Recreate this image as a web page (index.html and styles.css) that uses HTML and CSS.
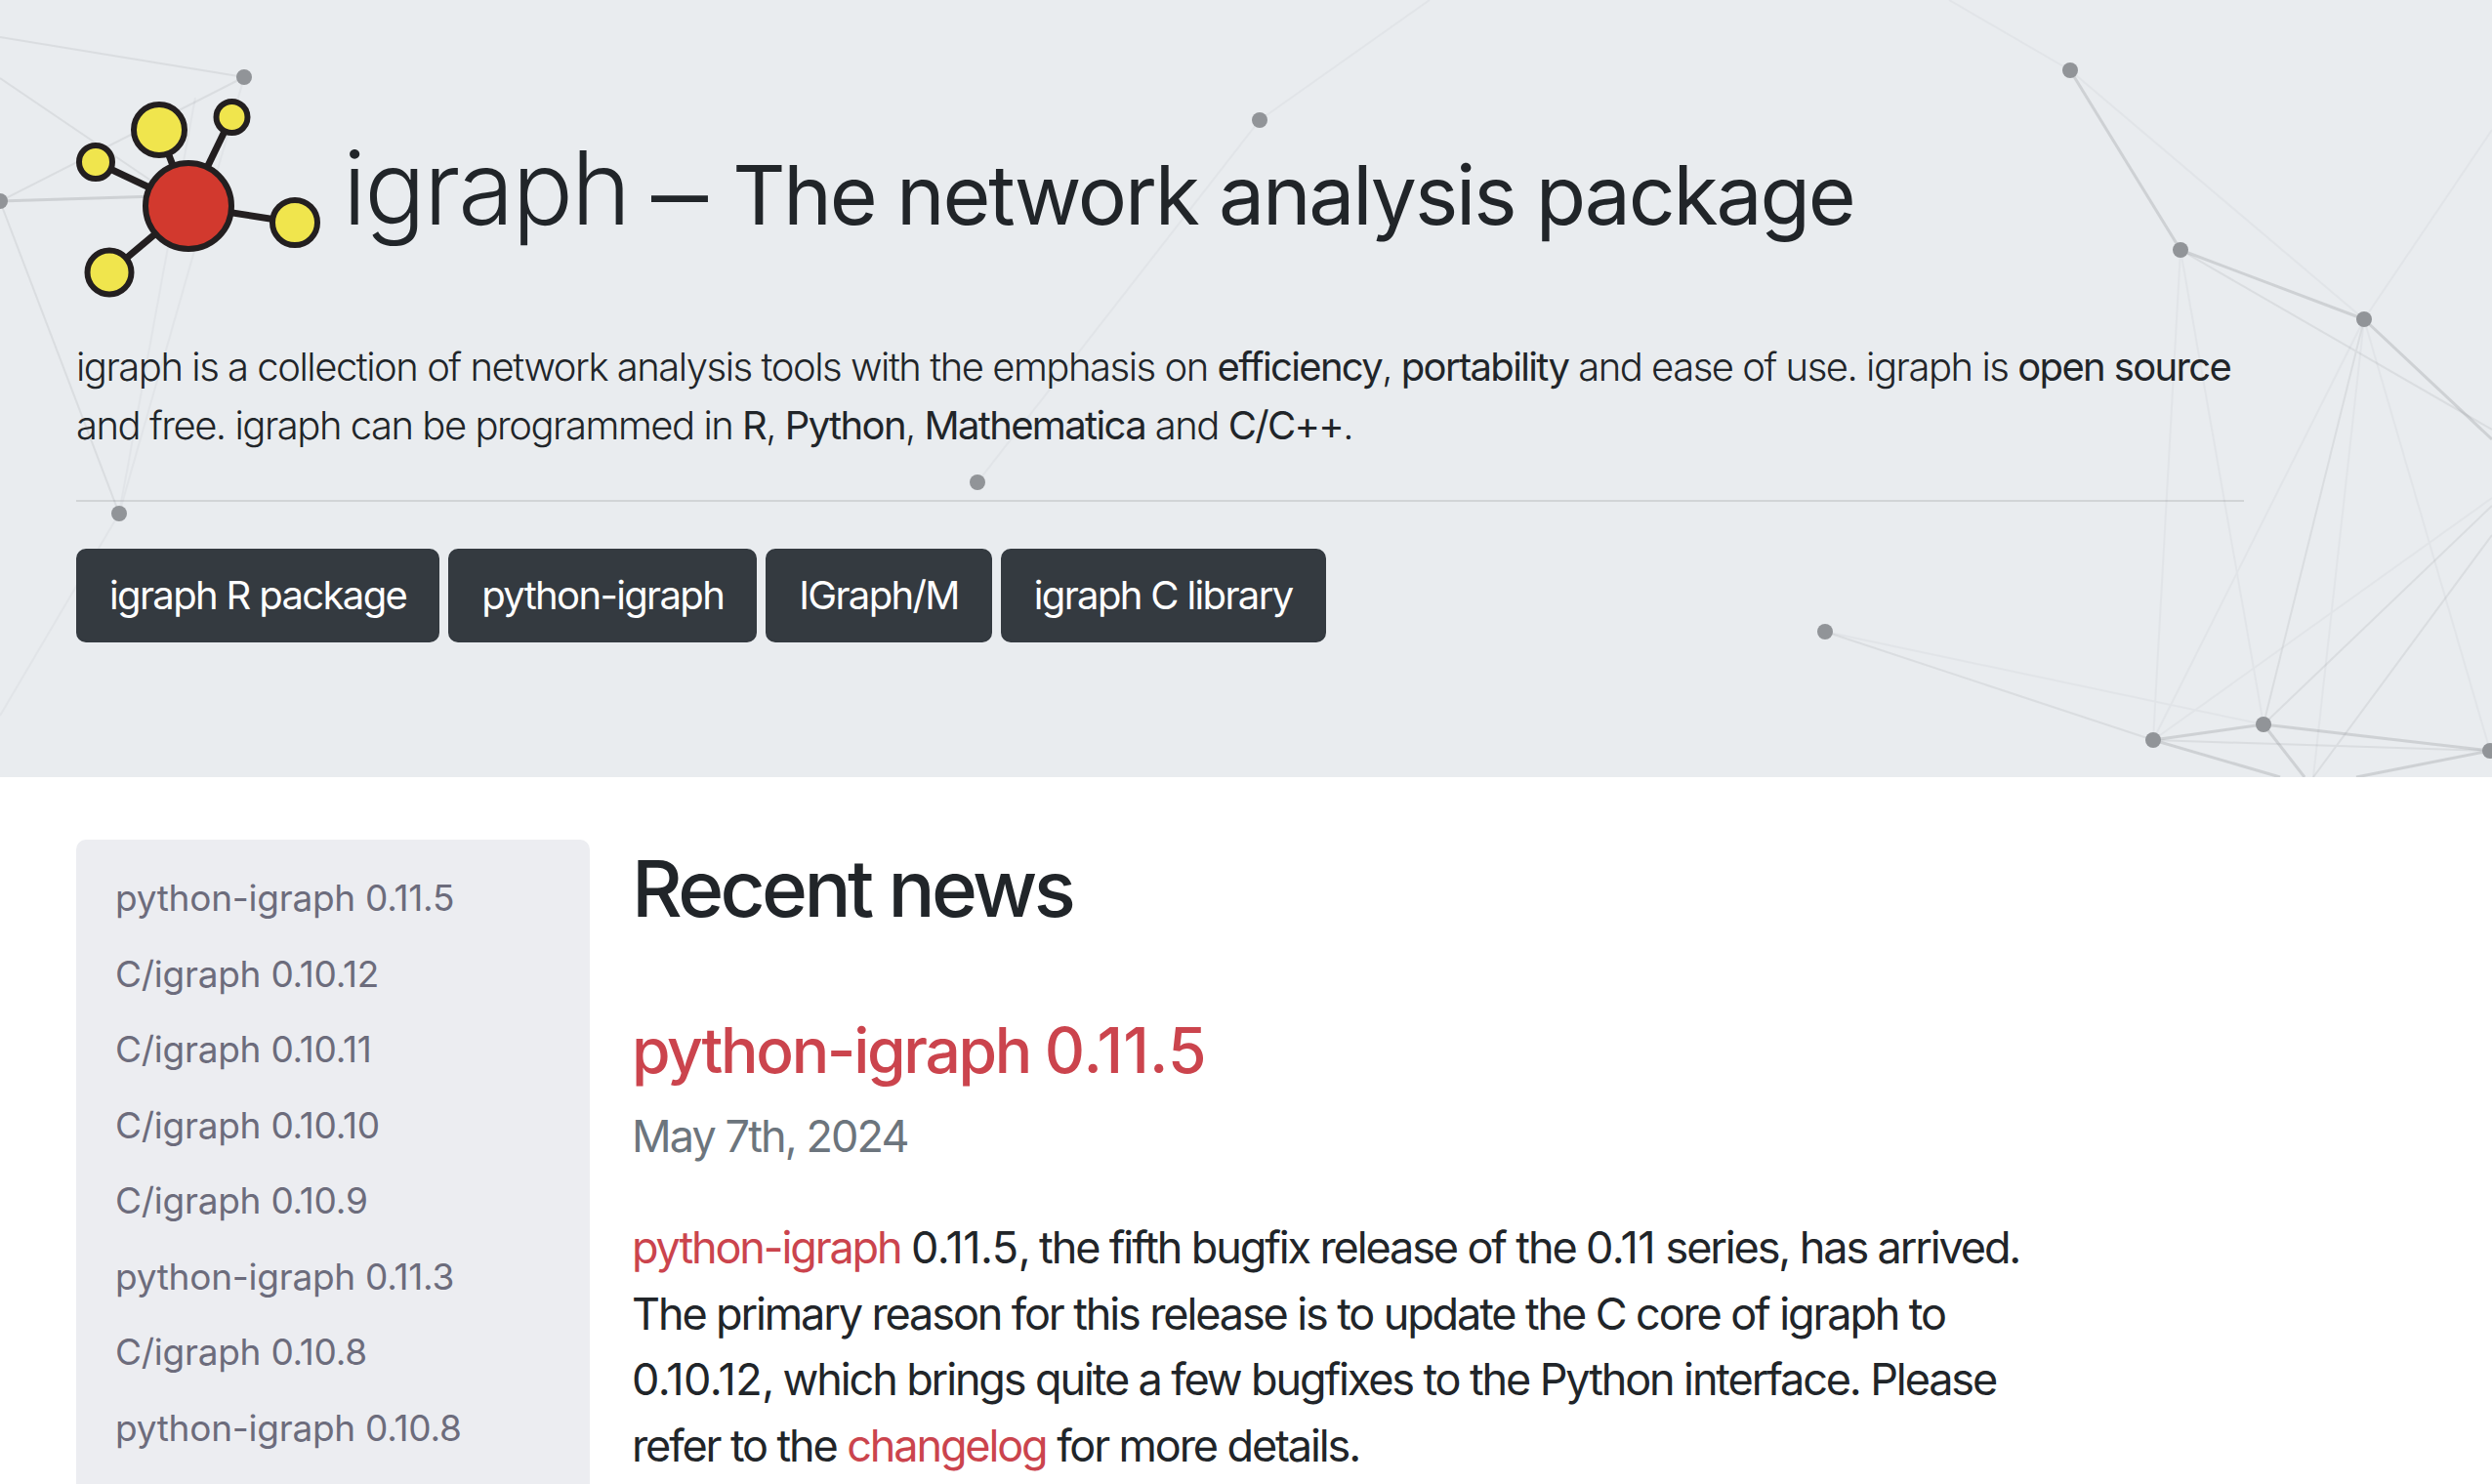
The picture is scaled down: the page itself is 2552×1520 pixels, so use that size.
FILE: index.html
```html
<!DOCTYPE html>
<html lang="en">
<head>
    <meta charset="UTF-8">
    <meta name="viewport" content="width=device-width, initial-scale=1.0">
    <title>igraph – The network analysis package</title>
    <link rel="stylesheet" href="styles.css">
</head>
<body>
    <header class="jumbotron">
        <!-- network drawing behind the header -->
        <svg class="network" width="2552" height="796" viewBox="0 0 2552 796">
            <g class="edges-faint">
                <line x1="1290" y1="123" x2="1464" y2="0"/>
                <line x1="1290" y1="123" x2="1001" y2="494"/>
                <line x1="2120" y1="72" x2="1996" y2="0"/>
                <line x1="2120" y1="72" x2="2421" y2="327"/>
                <line x1="2233" y1="256" x2="2205" y2="758"/>
                <line x1="2233" y1="256" x2="2318" y2="742"/>
                <line x1="2421" y1="327" x2="2552" y2="133"/>
                <line x1="2421" y1="327" x2="2205" y2="758"/>
                <line x1="2421" y1="327" x2="2369" y2="796"/>
                <line x1="2421" y1="327" x2="2550" y2="769"/>
                <line x1="2552" y1="510" x2="2205" y2="758"/>
                <line x1="1869" y1="647" x2="2318" y2="742"/>
                <line x1="122" y1="526" x2="0" y2="733"/>
                <line x1="122" y1="526" x2="250" y2="79"/>
                <line x1="122" y1="526" x2="200" y2="100"/>
            </g>
            <g class="edges-mid">
                <line x1="0" y1="38" x2="250" y2="79"/>
                <line x1="0" y1="80" x2="193" y2="211"/>
                <line x1="250" y1="79" x2="0" y2="206"/>
                <line x1="0" y1="206" x2="122" y2="526"/>
                <line x1="2233" y1="256" x2="2552" y2="440"/>
                <line x1="2421" y1="327" x2="2318" y2="742"/>
                <line x1="2552" y1="518" x2="2318" y2="742"/>
                <line x1="2552" y1="548" x2="2369" y2="796"/>
                <line x1="1869" y1="647" x2="2205" y2="758"/>
                <line x1="2205" y1="758" x2="2550" y2="769"/>
            </g>
            <g class="edges-strong">
                <line x1="0" y1="206" x2="193" y2="200"/>
                <line x1="2120" y1="72" x2="2233" y2="256"/>
                <line x1="2233" y1="256" x2="2421" y2="327"/>
                <line x1="2421" y1="327" x2="2552" y2="450"/>
                <line x1="2205" y1="758" x2="2318" y2="742"/>
                <line x1="2318" y1="742" x2="2550" y2="769"/>
                <line x1="2205" y1="758" x2="2335" y2="796"/>
                <line x1="2318" y1="742" x2="2360" y2="796"/>
                <line x1="2550" y1="769" x2="2413" y2="796"/>
            </g>
            <g class="nodes">
                <circle cx="250" cy="79" r="8"/>
                <circle cx="0" cy="206" r="8"/>
                <circle cx="122" cy="526" r="8"/>
                <circle cx="1290" cy="123" r="8"/>
                <circle cx="1001" cy="494" r="8"/>
                <circle cx="2120" cy="72" r="8"/>
                <circle cx="2233" cy="256" r="8"/>
                <circle cx="2421" cy="327" r="8"/>
                <circle cx="1869" cy="647" r="8"/>
                <circle cx="2205" cy="758" r="8"/>
                <circle cx="2318" cy="742" r="8"/>
                <circle cx="2550" cy="769" r="8"/>
            </g>
        </svg>

        <div class="jumbotron-inner">
            <h1 class="title">
                <svg class="logo" width="254" height="222" viewBox="78 86 254 222">
                    <g class="logo-links">
                        <line x1="193" y1="211" x2="163" y2="133"/>
                        <line x1="193" y1="211" x2="237" y2="120"/>
                        <line x1="193" y1="211" x2="98" y2="166"/>
                        <line x1="193" y1="211" x2="302" y2="228"/>
                        <line x1="193" y1="211" x2="112" y2="279"/>
                    </g>
                    <circle class="logo-leaf" cx="163" cy="133" r="26"/>
                    <circle class="logo-leaf" cx="237.500" cy="120" r="16"/>
                    <circle class="logo-leaf" cx="98" cy="166" r="17"/>
                    <circle class="logo-leaf" cx="302" cy="228" r="23"/>
                    <circle class="logo-leaf" cx="112" cy="279" r="22.500"/>
                    <circle class="logo-hub" cx="193" cy="211" r="44"/>
                </svg>
                <span class="title-text">
                    <span class="title-name">igraph</span>
                    <span class="title-dash">–</span>
                    <span class="title-rest">The network analysis package</span>
                </span>
            </h1>

            <p class="lead">igraph is a collection of network analysis tools with the emphasis on <strong>efficiency</strong>, <strong>portability</strong> and ease of use. igraph is <strong>open source</strong> and free. igraph can be programmed in <strong>R</strong>, <strong>Python</strong>, <strong>Mathematica</strong> and <strong>C/C++</strong>.</p>

            <hr class="divider">

            <div class="btn-row">
                <a class="btn" href="#">igraph R package</a>
                <a class="btn" href="#">python-igraph</a>
                <a class="btn" href="#">IGraph/M</a>
                <a class="btn" href="#">igraph C library</a>
            </div>
        </div>
    </header>

    <div class="page">
        <nav class="sidebar">
            <a href="#">python-igraph 0.11.5</a>
            <a href="#">C/igraph 0.10.12</a>
            <a href="#">C/igraph 0.10.11</a>
            <a href="#">C/igraph 0.10.10</a>
            <a href="#">C/igraph 0.10.9</a>
            <a href="#">python-igraph 0.11.3</a>
            <a href="#">C/igraph 0.10.8</a>
            <a href="#">python-igraph 0.10.8</a>
        </nav>

        <main class="news">
            <h1 class="news-heading">Recent news</h1>
            <h2 class="post-title"><a href="#">python-igraph <span class="ver">0.11.5</span></a></h2>
            <p class="post-date">May 7th, 2024</p>
            <p class="post-body"><a href="#">python-igraph</a> <span class="ver">0.11.5</span>, the fifth bugfix release of the <span class="ver">0.11</span> series, has arrived. The primary reason for this release is to update the C core of igraph to <span class="ver">0.10.12</span>, which brings quite a few bugfixes to the Python interface. Please refer to the <a href="#">changelog</a> for more details.</p>
        </main>
    </div>
</body>
</html>
```
FILE: styles.css
```css
body {
    font-family: Inter, "Liberation Sans", sans-serif;
    color: #212529;
    background-color: #fff;
    margin: 0;
    height: 100vh;
    overflow: hidden;
    display: flex;
    flex-direction: column;
}

a {
    color: #cb444d;
    text-decoration: none;
}

/* header */
.jumbotron {
    position: relative;
    height: 796px;
    flex-shrink: 0;
    background-color: #e9ecef;
    overflow: hidden;
    box-sizing: border-box;
    padding: 0 78px;
}

.network {
    position: absolute;
    left: 0;
    top: 0;
}

.network line {
    stroke: #8a8d92;
}

.edges-faint {
    stroke-width: 2;
    opacity: 0.07;
}

.edges-mid {
    stroke-width: 2;
    opacity: 0.15;
}

.edges-strong {
    stroke-width: 3;
    opacity: 0.28;
}

.nodes {
    fill: #919498;
}

.jumbotron-inner {
    position: relative;
    width: 2220px;
}

.title {
    margin: 0;
    height: 312px;
    display: flex;
    align-items: flex-start;
    font-weight: 400;
}

.title-text {
    display: flex;
    align-items: baseline;
    gap: 27px;
    margin-top: 132px;
}

.logo {
    margin-top: 86px;
    margin-right: 19px;
    flex-shrink: 0;
}

.logo-links line {
    stroke: #231f20;
    stroke-width: 7;
}

.logo-leaf {
    fill: #f0e54d;
    stroke: #231f20;
    stroke-width: 6;
}

.logo-hub {
    fill: #d2392e;
    stroke: #231f20;
    stroke-width: 6;
}

.title-name {
    font-size: 104px;
    font-weight: 300;
    line-height: 120px;
    letter-spacing: -2px;
}

.title-dash {
    display: inline-block;
    font-size: 84px;
    margin: 0 6px 0 4px;
    transform: scaleX(1.38);
}

.title-rest {
    font-size: 84px;
    font-weight: 400;
    letter-spacing: -2.200px;
}

.lead {
    font-size: 40px;
    font-weight: 300;
    line-height: 60px;
    letter-spacing: -1.480px;
    margin: 34px 0 0;
}

.lead strong {
    font-weight: 400;
    letter-spacing: -1.650px;
}

.divider {
    border: 0;
    border-top: 2px solid rgba(0, 0, 0, 0.1);
    margin: 46px 0 48px;
}

.btn-row {
    display: flex;
    gap: 9px;
}

.btn {
    color: #fff;
    background-color: #343a40;
    border: 2px solid #343a40;
    border-radius: 10px;
    font-size: 40px;
    line-height: 60px;
    letter-spacing: -1.650px;
    padding: 16px 32px;
}

/* lower part */
.page {
    flex: 1;
    display: flex;
    min-height: 0;
    padding: 64px 78px 0;
}

.sidebar {
    width: 526px;
    box-sizing: border-box;
    background-color: #ecedf1;
    border-radius: 10px 10px 0 0;
    padding: 21px 40px;
    display: flex;
    flex-direction: column;
}

.sidebar a {
    color: #6c6c7c;
    font-size: 37px;
    line-height: 77.500px;
    letter-spacing: -0.250px;
}

.news {
    width: 1470px;
    margin-left: 43px;
}

.news-heading {
    font-size: 80px;
    font-weight: 500;
    line-height: 86px;
    letter-spacing: -3.600px;
    margin: 7px 0 87px;
}

.post-title {
    font-size: 64px;
    font-weight: 500;
    line-height: 72px;
    letter-spacing: -2.300px;
    margin: 0;
}

.post-title .ver {
    letter-spacing: 0.200px;
}

.post-date {
    font-size: 45px;
    line-height: 68px;
    letter-spacing: -1.900px;
    color: #6c757d;
    margin: 18px 0 0;
}

.post-body {
    font-size: 45px;
    line-height: 67.500px;
    letter-spacing: -2.120px;
    margin: 46px 0 0;
}

/* version numbers run a bit wider than the words around them */
.post-body .ver {
    letter-spacing: -0.500px;
}
```
